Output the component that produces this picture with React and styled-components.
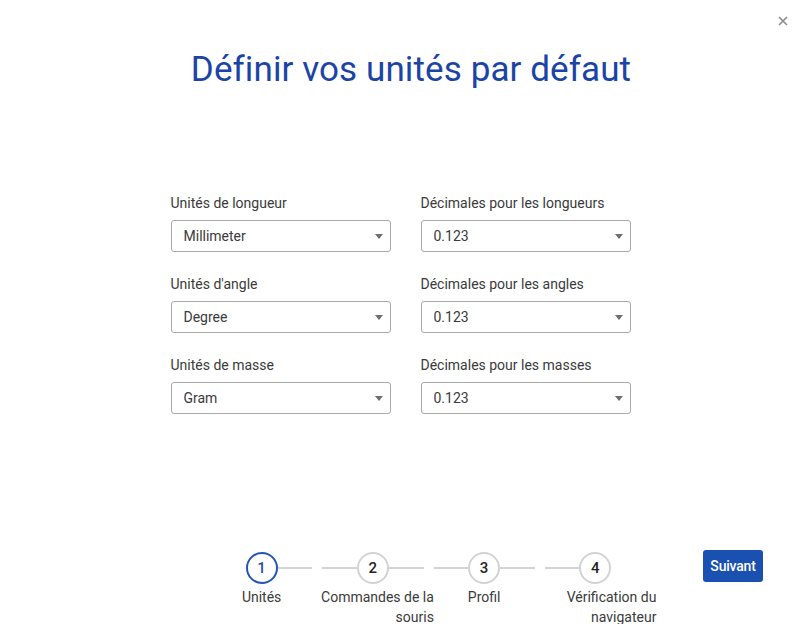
import React, { useState } from "react";
import styled, { createGlobalStyle, css } from "styled-components";

const GlobalStyle = createGlobalStyle`
  html, body {
    margin: 0;
    padding: 0;
    background: #fff;
  }
  body {
    font-family: Roboto, "Noto Sans", "Liberation Sans", sans-serif;
    color: #333;
  }
`;

const Dialog = styled.div`
  position: relative;
  width: 800px;
  height: 624px;
  overflow: hidden;
  display: flex;
  flex-direction: column;
  align-items: center;
  box-sizing: border-box;
`;

const CloseButton = styled.button`
  position: absolute;
  top: 14px;
  right: 10px;
  width: 14px;
  height: 14px;
  padding: 0;
  border: none;
  background: transparent;
  cursor: pointer;
  display: flex;
  align-items: center;
  justify-content: center;
`;

const Title = styled.h1`
  margin: 49px 0 0 22px;
  font-size: 35px;
  line-height: 42px;
  font-weight: 400;
  color: #1b44a6;
  letter-spacing: 0.1px;
`;

const Form = styled.div`
  margin-top: 103px;
  display: grid;
  grid-template-columns: 220px 210px;
  column-gap: 30px;
  row-gap: 23px;
  margin-left: 1px;
`;

const Field = styled.div`
  display: flex;
  flex-direction: column;
  gap: 8px;
`;

const Label = styled.label`
  font-size: 14px;
  line-height: 18px;
  color: #3a3a3a;
`;

const SelectWrap = styled.div`
  position: relative;
  height: 32px;
`;

const Select = styled.select`
  appearance: none;
  width: 100%;
  height: 32px;
  box-sizing: border-box;
  border: 1px solid #a8a8a8;
  border-radius: 3px;
  background: #fff;
  padding: 0 28px 0 12px;
  font-family: inherit;
  font-size: 14px;
  color: #3a3a3a;
  outline: none;
`;

const Caret = styled.svg`
  position: absolute;
  right: 8px;
  top: 14px;
  pointer-events: none;
`;

const Footer = styled.div`
  margin-top: 136px;
  align-self: stretch;
  display: flex;
  justify-content: flex-end;
  align-items: flex-start;
  padding-right: 37px;
`;

const Stepper = styled.ol`
  list-style: none;
  margin: 2px 52px 0 0;
  padding: 0;
  display: flex;
`;

const Step = styled.li`
  width: 111.25px;
  display: flex;
  flex-direction: column;
  align-items: center;
`;

const Track = styled.div`
  align-self: stretch;
  display: flex;
  align-items: center;
`;

const Line = styled.div`
  flex: 1;
  height: 2px;
  background: #d3d3d3;
  ${(props) => (props.$side === "left" ? css`margin-left: 5px;` : css`margin-right: 5px;`)}
  visibility: ${(props) => (props.$hidden ? "hidden" : "visible")};
`;

const Circle = styled.div`
  width: 32px;
  height: 32px;
  box-sizing: border-box;
  border-radius: 50%;
  border: 2px solid ${(props) => (props.$active ? "#2455b3" : "#d3d3d3")};
  color: ${(props) => (props.$active ? "#1f4fae" : "#222")};
  display: flex;
  align-items: center;
  justify-content: center;
  font-size: 15px;
  font-weight: 500;
`;

const StepLabel = styled.div`
  margin-top: 3px;
  width: max-content;
  max-width: 122px;
  text-align: right;
  font-size: 14px;
  line-height: 20px;
  color: #3a3a3a;
`;

const NextButton = styled.button`
  width: 60px;
  height: 32px;
  border: none;
  border-radius: 3px;
  background: #1a50b0;
  color: #fff;
  font-family: inherit;
  font-size: 14px;
  font-weight: 500;
  letter-spacing: -0.2px;
  cursor: pointer;
  padding: 0;
`;

const fields = [
  { id: "len", label: "Unités de longueur", options: ["Millimeter", "Centimeter", "Meter", "Inch", "Foot", "Yard"] },
  { id: "lenDec", label: "Décimales pour les longueurs", options: ["0.123", "0", "0.1", "0.12", "0.1234"] },
  { id: "ang", label: "Unités d'angle", options: ["Degree", "Radian"] },
  { id: "angDec", label: "Décimales pour les angles", options: ["0.123", "0", "0.1", "0.12", "0.1234"] },
  { id: "mass", label: "Unités de masse", options: ["Gram", "Kilogram", "Pound", "Ounce"] },
  { id: "massDec", label: "Décimales pour les masses", options: ["0.123", "0", "0.1", "0.12", "0.1234"] },
];

const steps = ["Unités", "Commandes de la souris", "Profil", "Vérification du navigateur"];

const App = () => {
  const [values, setValues] = useState(
    Object.fromEntries(fields.map((f) => [f.id, f.options[0]]))
  );
  const [current] = useState(0);

  return (
    <>
      <GlobalStyle />
      <Dialog>
        <CloseButton aria-label="Fermer">
          <svg width="10" height="10" viewBox="0 0 10 10">
            <path d="M1 1L9 9M9 1L1 9" stroke="#8a8a8a" strokeWidth="1.6" />
          </svg>
        </CloseButton>

        <Title>Définir vos unités par défaut</Title>

        <Form>
          {fields.map((f) => (
            <Field key={f.id}>
              <Label htmlFor={f.id}>{f.label}</Label>
              <SelectWrap>
                <Select
                  id={f.id}
                  value={values[f.id]}
                  onChange={(e) => setValues((prev) => ({ ...prev, [f.id]: e.target.value }))}
                >
                  {f.options.map((o) => (
                    <option key={o}>{o}</option>
                  ))}
                </Select>
                <Caret width="8" height="5" viewBox="0 0 8 5">
                  <path d="M0 0H8L4 5Z" fill="#6f6f6f" />
                </Caret>
              </SelectWrap>
            </Field>
          ))}
        </Form>

        <Footer>
          <Stepper>
            {steps.map((s, i) => (
              <Step key={s}>
                <Track>
                  <Line $side="left" $hidden={i === 0} />
                  <Circle $active={i === current}>{i + 1}</Circle>
                  <Line $side="right" $hidden={i === steps.length - 1} />
                </Track>
                <StepLabel>{s}</StepLabel>
              </Step>
            ))}
          </Stepper>
          <NextButton>Suivant</NextButton>
        </Footer>
      </Dialog>
    </>
  );
};

export default App;
